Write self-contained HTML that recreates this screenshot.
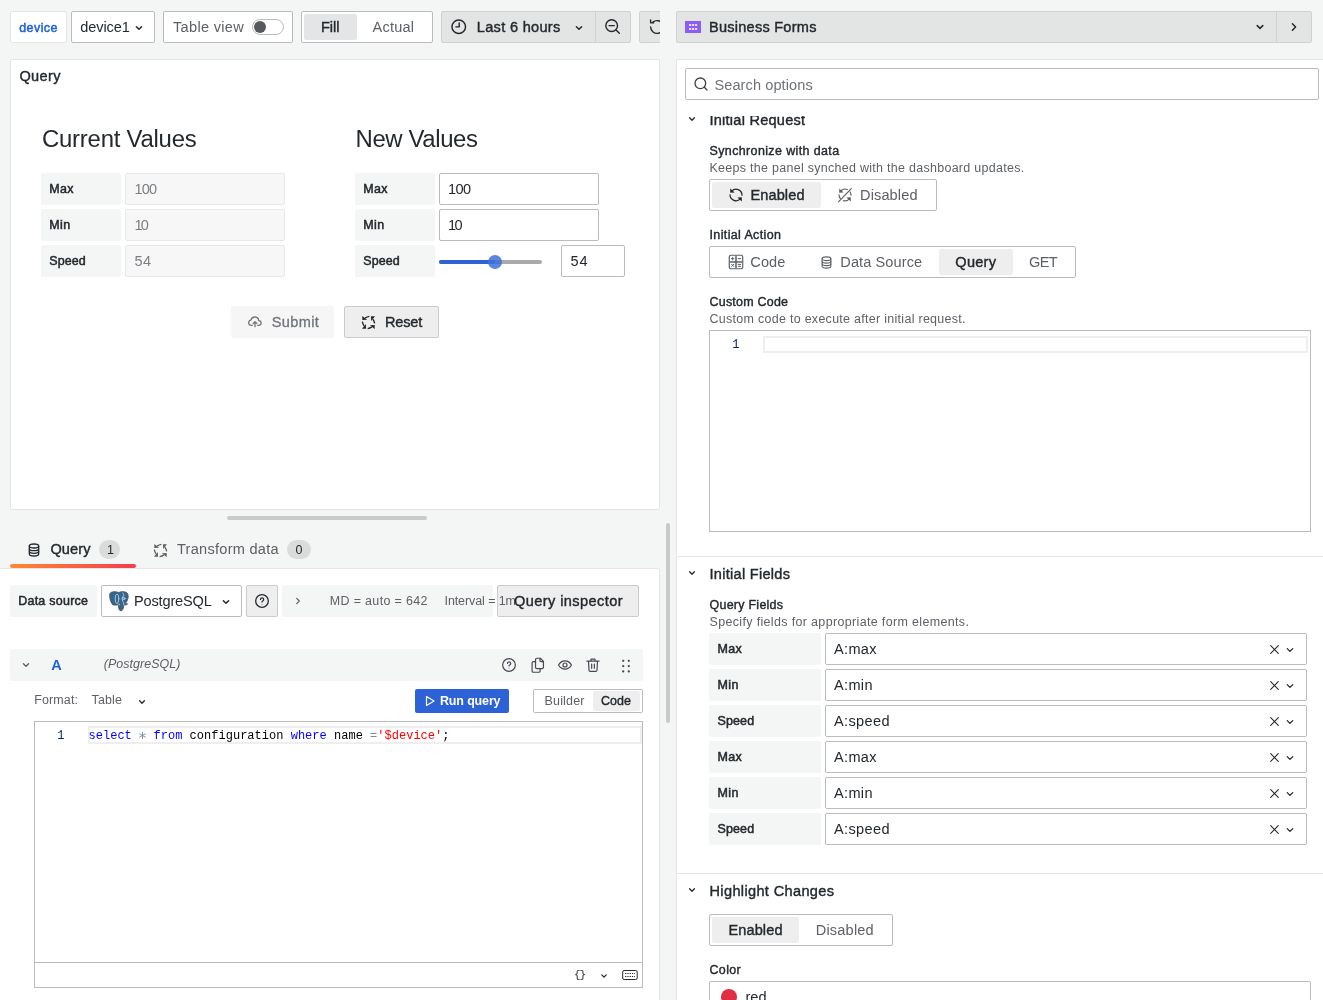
<!DOCTYPE html>
<html><head><meta charset="utf-8"><title>Edit panel</title>
<style>
html,body{margin:0;padding:0;}
body{width:1323px;height:1000px;overflow:hidden;background:#f4f5f5;position:relative;font-family:"Liberation Sans",sans-serif;color:#24292e;}
.b{position:absolute;box-sizing:border-box;}
.t{position:absolute;white-space:pre;}
svg{position:absolute;overflow:visible;}
.i{fill:none;stroke:#24292e;stroke-width:1.4;stroke-linecap:round;stroke-linejoin:round;}
</style></head><body>
<div class="b" style="left:10px;top:11px;width:57px;height:32px;background:#fff;border:1px solid #e5e5e6;border-radius:2px;"></div>
<div class="b" style="left:71px;top:11px;width:84px;height:32px;background:#fff;border:1px solid #b9bbbd;border-radius:2px;"></div>
<svg style="left:133px;top:21.5px" width="12" height="12" viewBox="-6 -6 12 12"><path d="M-2.6 -1.3 L0 1.3 L2.6 -1.3" fill="none" stroke="#24292e" stroke-width="1.5" stroke-linecap="round" stroke-linejoin="round"/></svg>
<div class="b" style="left:163px;top:11px;width:130px;height:32px;background:#fff;border:1px solid #b9bbbd;border-radius:2px;"></div>
<div class="b" style="left:252px;top:19px;width:32px;height:16px;background:#fff;border:1px solid #b9bbbd;border-radius:8px;"></div>
<div class="b" style="left:254px;top:21px;width:12px;height:12px;border-radius:6px;background:#56595e"></div>
<div class="b" style="left:301px;top:11px;width:132px;height:32px;background:#fff;border:1px solid #b9bbbd;border-radius:2px;"></div>
<div class="b" style="left:304px;top:14px;width:53px;height:26px;background:#e4e5e6;border-radius:2px;"></div>
<div class="b" style="left:441px;top:11px;width:190px;height:32px;background:#e3e4e4;border:1px solid #cfd1d2;border-radius:2px;"></div>
<div class="b" style="left:595px;top:12px;width:1px;height:30px;background:#cfd1d2"></div>
<svg style="left:450.25px;top:18.15px" width="17.5" height="17.5" viewBox="0 0 24 24" fill="none" stroke="#24292e" stroke-width="1.9885714285714284" stroke-linecap="round" stroke-linejoin="round"><circle cx="12" cy="12" r="9.300"/><path d="M12.600 6.800v5.400H8.200"/></svg>
<svg style="left:572.8px;top:21.5px" width="12" height="12" viewBox="-6 -6 12 12"><path d="M-2.6 -1.3 L0 1.3 L2.6 -1.3" fill="none" stroke="#24292e" stroke-width="1.5" stroke-linecap="round" stroke-linejoin="round"/></svg>
<svg style="left:603.95px;top:18.05px" width="17.5" height="17.5" viewBox="0 0 24 24" fill="none" stroke="#24292e" stroke-width="1.9199999999999997" stroke-linecap="round" stroke-linejoin="round"><circle cx="10.500" cy="10.500" r="8"/><path d="M7 10.500h7M16.500 16.500l4.500 4.500"/></svg>
<div class="b" style="left:639px;top:11px;width:21px;height:32px;overflow:hidden"><div class="b" style="left:0;top:0;width:60px;height:32px;background:#e3e4e4;border:1px solid #cfd1d2;border-radius:2px"></div><svg style="left:8.500px;top:7px" width="18" height="18" viewBox="0 0 24 24" fill="none" stroke="#24292e" stroke-width="1.900" stroke-linecap="round" stroke-linejoin="round"><path d="M3.5 12a8.5 8.5 0 1 0 3-6.5M3.5 2.5v4h4"/></svg></div>
<div class="b" style="left:10px;top:59px;width:650px;height:451px;background:#fff;border:1px solid #e5e5e6;border-radius:2px;"></div>
<div class="b" style="left:41px;top:173px;width:80px;height:32px;background:#f4f5f5;border-radius:2px;"></div>
<div class="b" style="left:355px;top:173px;width:80px;height:32px;background:#f4f5f5;border-radius:2px;"></div>
<div class="b" style="left:125px;top:173px;width:160px;height:32px;background:#f7f7f7;border:1px solid #e7e8e9;border-radius:2px;"></div>
<div class="b" style="left:41px;top:209px;width:80px;height:32px;background:#f4f5f5;border-radius:2px;"></div>
<div class="b" style="left:355px;top:209px;width:80px;height:32px;background:#f4f5f5;border-radius:2px;"></div>
<div class="b" style="left:125px;top:209px;width:160px;height:32px;background:#f7f7f7;border:1px solid #e7e8e9;border-radius:2px;"></div>
<div class="b" style="left:41px;top:245px;width:80px;height:32px;background:#f4f5f5;border-radius:2px;"></div>
<div class="b" style="left:355px;top:245px;width:80px;height:32px;background:#f4f5f5;border-radius:2px;"></div>
<div class="b" style="left:125px;top:245px;width:160px;height:32px;background:#f7f7f7;border:1px solid #e7e8e9;border-radius:2px;"></div>
<div class="b" style="left:439px;top:173px;width:160px;height:32px;background:#fff;border:1px solid #b9bbbd;border-radius:2px;"></div>
<div class="b" style="left:439px;top:209px;width:160px;height:32px;background:#fff;border:1px solid #b9bbbd;border-radius:2px;"></div>
<div class="b" style="left:439px;top:260px;width:103px;height:4px;border-radius:2px;background:#a8aaac"></div>
<div class="b" style="left:439px;top:260px;width:56px;height:4px;border-radius:2px;background:#2c62d6"></div>
<div class="b" style="left:488px;top:255px;width:14px;height:14px;border-radius:7px;background:rgba(61,113,217,0.850)"></div>
<div class="b" style="left:561px;top:245px;width:64px;height:32px;background:#fff;border:1px solid #b9bbbd;border-radius:2px;"></div>
<div class="b" style="left:231px;top:306px;width:103px;height:32px;background:#f6f6f7;border-radius:2px;"></div>
<svg style="left:246.8px;top:314.0px" width="16" height="16" viewBox="0 0 24 24" fill="none" stroke="#74787d" stroke-width="1.9500000000000002" stroke-linecap="round" stroke-linejoin="round"><path d="M8 17H6.5a4 4 0 0 1-.6-7.95A6 6 0 0 1 17.7 10a3.5 3.5 0 0 1-.2 7H16"/><path d="M12 19v-7M9.3 14.2L12 11.5l2.7 2.7"/></svg>
<div class="b" style="left:344px;top:306px;width:95px;height:32px;background:#eeeeef;border:1px solid #c9cbcd;border-radius:2px;"></div>
<svg style="left:359.5px;top:313.5px" width="17" height="17" viewBox="0 0 24 24"><g transform="rotate(0 12 12)"><path d="M3.300 2.800L3.300 8.600L10 8.200Z" fill="#24292e" stroke="none"/><path d="M7.200 5.800Q10 3.800 13.200 3.300" stroke="#24292e" stroke-width="1.900" fill="none" stroke-linecap="butt"/></g><g transform="rotate(90 12 12)"><path d="M3.300 2.800L3.300 8.600L10 8.200Z" fill="#24292e" stroke="none"/><path d="M7.200 5.800Q10 3.800 13.200 3.300" stroke="#24292e" stroke-width="1.900" fill="none" stroke-linecap="butt"/></g><g transform="rotate(180 12 12)"><path d="M3.300 2.800L3.300 8.600L10 8.200Z" fill="#24292e" stroke="none"/><path d="M7.200 5.800Q10 3.800 13.200 3.300" stroke="#24292e" stroke-width="1.900" fill="none" stroke-linecap="butt"/></g><g transform="rotate(270 12 12)"><path d="M3.300 2.800L3.300 8.600L10 8.200Z" fill="#24292e" stroke="none"/><path d="M7.200 5.800Q10 3.800 13.200 3.300" stroke="#24292e" stroke-width="1.900" fill="none" stroke-linecap="butt"/></g></svg>
<div class="b" style="left:227px;top:516px;width:200px;height:4px;border-radius:2px;background:#c9caca"></div>
<svg style="left:25.700000000000003px;top:542.0px" width="16" height="16" viewBox="0 0 24 24" fill="none" stroke="#24292e" stroke-width="1.9500000000000002" stroke-linecap="round" stroke-linejoin="round"><ellipse cx="12" cy="6" rx="7" ry="3"/><path d="M5 6v12c0 1.66 3.13 3 7 3s7-1.34 7-3V6"/><path d="M5 10c0 1.66 3.13 3 7 3s7-1.34 7-3M5 14c0 1.66 3.13 3 7 3s7-1.34 7-3"/></svg>
<div class="b" style="left:99px;top:540px;width:21px;height:19px;background:#dadbdb;border-radius:9.5px;"></div>
<svg style="left:151.5px;top:541.5px" width="17" height="17" viewBox="0 0 24 24"><g transform="rotate(0 12 12)"><path d="M3.300 2.800L3.300 8.600L10 8.200Z" fill="#5d6166" stroke="none"/><path d="M7.200 5.800Q10 3.800 13.200 3.300" stroke="#5d6166" stroke-width="1.900" fill="none" stroke-linecap="butt"/></g><g transform="rotate(90 12 12)"><path d="M3.300 2.800L3.300 8.600L10 8.200Z" fill="#5d6166" stroke="none"/><path d="M7.200 5.800Q10 3.800 13.200 3.300" stroke="#5d6166" stroke-width="1.900" fill="none" stroke-linecap="butt"/></g><g transform="rotate(180 12 12)"><path d="M3.300 2.800L3.300 8.600L10 8.200Z" fill="#5d6166" stroke="none"/><path d="M7.200 5.800Q10 3.800 13.200 3.300" stroke="#5d6166" stroke-width="1.900" fill="none" stroke-linecap="butt"/></g><g transform="rotate(270 12 12)"><path d="M3.300 2.800L3.300 8.600L10 8.200Z" fill="#5d6166" stroke="none"/><path d="M7.200 5.800Q10 3.800 13.200 3.300" stroke="#5d6166" stroke-width="1.900" fill="none" stroke-linecap="butt"/></g></svg>
<div class="b" style="left:287px;top:540px;width:24px;height:19px;background:#dadbdb;border-radius:9.5px;"></div>
<div class="b" style="left:-2px;top:568px;width:662px;height:440px;background:#fff;border:1px solid #e5e5e6;border-radius:0 2px 0 0"></div>
<div class="b" style="left:10px;top:564px;width:126px;height:4px;border-radius:2px;background:linear-gradient(90deg,#ff8833,#f53e4c)"></div>
<div class="b" style="left:666px;top:523px;width:4px;height:200px;border-radius:2px;background:#c8c9ca"></div>
<div class="b" style="left:10px;top:585px;width:87px;height:32px;background:#f4f5f5;border-radius:2px;"></div>
<div class="b" style="left:101px;top:585px;width:141px;height:32px;background:#fff;border:1px solid #b9bbbd;border-radius:2px;"></div>
<svg style="left:109px;top:590.500px" width="20" height="20.500" viewBox="0 0 20 20.500"><path d="M3 1.200C6 0.200 8 0.900 9.500 1.500C12 0.300 16 0.300 18 2C20.500 5 18.500 10 16.200 12.500C17 12.800 18 12.600 18.600 12.900C17.500 14.100 15.500 14 14.800 13.800C14.600 16 14.300 18.500 12.800 19.600C10.500 20.300 9.600 18 9.600 16L9.500 13.500C8 14.300 5 14.300 3.500 13.500C1 10 0.200 5 1 2.500C1.500 1.500 2.200 1.300 3 1.200Z" fill="#336791" stroke="#4b4f55" stroke-width="0.900" stroke-linejoin="round"/><g fill="none" stroke="#dfe9f3" stroke-width="0.700" stroke-linecap="round"><ellipse cx="8" cy="7.800" rx="1.800" ry="4.800"/><path d="M13.500 1.800C15 3 15.500 4.800 13.400 6.200M13.400 6.200C12.500 8 13.500 10 14.500 11.500C15 12.500 14.800 13.300 14.800 13.800M9.600 12.800C10.500 12.500 10.800 13.200 10.300 14"/><circle cx="14.900" cy="7.600" r="1.100"/></g></svg>
<svg style="left:220px;top:595.5px" width="12" height="12" viewBox="-6 -6 12 12"><path d="M-2.6 -1.3 L0 1.3 L2.6 -1.3" fill="none" stroke="#24292e" stroke-width="1.5" stroke-linecap="round" stroke-linejoin="round"/></svg>
<div class="b" style="left:246px;top:585px;width:32px;height:32px;background:#eeeeef;border:1px solid #c9cbcd;border-radius:2px;"></div>
<svg style="left:254.0px;top:593.0px" width="16" height="16" viewBox="0 0 24 24" fill="none" stroke="#24292e" stroke-width="1.9500000000000002" stroke-linecap="round" stroke-linejoin="round"><circle cx="12" cy="12" r="9.500"/><path d="M9.700 9.700a2.400 2.400 0 1 1 3.300 2.300c-.7.300-1 .8-1 1.500"/><circle cx="12" cy="16.800" r="0.700" fill="#24292e" stroke="none"/></svg>
<div class="b" style="left:282px;top:585px;width:211px;height:32px;background:#f4f5f5;border-radius:2px;"></div>
<svg style="left:291.9px;top:595px" width="12" height="12" viewBox="-6 -6 12 12"><path d="M-1.3 -2.6 L1.3 0 L-1.3 2.6" fill="none" stroke="#5d6166" stroke-width="1.2" stroke-linecap="round" stroke-linejoin="round"/></svg>
<div class="b" style="left:497px;top:585px;width:142px;height:32px;background:#eeeeef;border:1px solid #c9cbcd;border-radius:2px;"></div>
<div class="b" style="left:10px;top:649px;width:633px;height:32px;background:#f4f5f5;border-radius:2px;"></div>
<svg style="left:20px;top:659px" width="12" height="12" viewBox="-6 -6 12 12"><path d="M-2.6 -1.3 L0 1.3 L2.6 -1.3" fill="none" stroke="#5d6166" stroke-width="1.3" stroke-linecap="round" stroke-linejoin="round"/></svg>
<svg style="left:500.6px;top:657.0px" width="16" height="16" viewBox="0 0 24 24" fill="none" stroke="#464a50" stroke-width="1.7999999999999998" stroke-linecap="round" stroke-linejoin="round"><circle cx="12" cy="12" r="9.500"/><path d="M9.700 9.700a2.400 2.400 0 1 1 3.300 2.300c-.7.300-1 .8-1 1.500"/><circle cx="12" cy="16.800" r="0.700" fill="#464a50" stroke="none"/></svg>
<svg style="left:528.75px;top:656.75px" width="16.5" height="16.5" viewBox="0 0 24 24" fill="none" stroke="#464a50" stroke-width="1.7454545454545454" stroke-linecap="round" stroke-linejoin="round"><path d="M11.500 1.800h5l4.500 4.500v8.700a2 2 0 0 1-2 2h-7.500a2 2 0 0 1-2-2V3.800a2 2 0 0 1 2-2z"/><path d="M16 2v3.300a1.500 1.500 0 0 0 1.500 1.500h3.300"/><path d="M9.300 6.800H6.500a2 2 0 0 0-2 2v11.400a2 2 0 0 0 2 2h7.700a2 2 0 0 0 2-2v-3"/></svg>
<svg style="left:557.0px;top:657.2px" width="16" height="16" viewBox="0 0 24 24" fill="none" stroke="#464a50" stroke-width="1.7999999999999998" stroke-linecap="round" stroke-linejoin="round"><path d="M2.300 12S5.800 5.800 12 5.800s9.700 6.200 9.700 6.200-3.500 6.200-9.700 6.200S2.300 12 2.300 12z"/><circle cx="12" cy="12" r="3"/></svg>
<svg style="left:584.9px;top:657.0px" width="16" height="16" viewBox="0 0 24 24" fill="none" stroke="#464a50" stroke-width="1.7999999999999998" stroke-linecap="round" stroke-linejoin="round"><path d="M3 6.300h18M9 6.300V3.300h6v3M5.300 6.300l.7 13.700a1.800 1.800 0 0 0 1.800 1.700h8.400a1.800 1.800 0 0 0 1.800-1.700l.7-13.700M10 10.500v6.500M14 10.500v6.500"/></svg>
<svg style="left:620px;top:658px" width="12" height="16" viewBox="0 0 12 16" fill="#464a50"><circle cx="3.200" cy="2.800" r="1.150"/><circle cx="8.800" cy="2.800" r="1.150"/><circle cx="3.200" cy="8.100" r="1.150"/><circle cx="8.800" cy="8.100" r="1.150"/><circle cx="3.200" cy="13.400" r="1.150"/><circle cx="8.800" cy="13.400" r="1.150"/></svg>
<svg style="left:136px;top:696px" width="12" height="12" viewBox="-6 -6 12 12"><path d="M-2.4 -1.2 L0 1.2 L2.4 -1.2" fill="none" stroke="#24292e" stroke-width="1.3" stroke-linecap="round" stroke-linejoin="round"/></svg>
<div class="b" style="left:415px;top:689px;width:94px;height:24px;background:#2c62d6;border-radius:2px;"></div>
<svg style="left:424px;top:694.500px" width="12" height="12" viewBox="0 0 12 12" fill="none" stroke="#fff" stroke-width="1.2" stroke-linejoin="round"><path d="M2.500 1.500v9l7.500-4.500z"/></svg>
<div class="b" style="left:533px;top:689px;width:110px;height:24px;background:#fff;border:1px solid #b9bbbd;border-radius:2px;"></div>
<div class="b" style="left:593px;top:691px;width:47px;height:20px;background:#eeeeef;border-radius:2px;"></div>
<div class="b" style="left:34px;top:721px;width:609px;height:242px;background:#fff;border:1px solid #b9bbbd;"></div>
<div class="b" style="left:34px;top:962px;width:609px;height:26px;background:#fff;border:1px solid #b9bbbd;"></div>
<div class="b" style="left:88px;top:726px;width:554px;height:18px;border:2px solid #eeeeee"></div>
<svg style="left:138.500px;top:732.300px" width="7" height="7" viewBox="-3.500 -3.500 7 7" stroke="#778899" stroke-width="0.900" stroke-linecap="round"><path d="M0 -3.200V3.200M-2.900 -1.600L2.900 1.600M-2.900 1.600L2.900 -1.600"/></svg>
<svg style="left:597.8px;top:969.5px" width="12" height="12" viewBox="-6 -6 12 12"><path d="M-2.2 -1.1 L0 1.1 L2.2 -1.1" fill="none" stroke="#24292e" stroke-width="1.3" stroke-linecap="round" stroke-linejoin="round"/></svg>
<svg style="left:622px;top:970px" width="16" height="10" viewBox="0 0 16 10" fill="none" stroke="#24292e" stroke-width="1"><rect x="0.7" y="0.5" width="14.500" height="9" rx="1.5"/><path d="M3 3.500h10M3 6.500h10" stroke-dasharray="1.3 1"/></svg>
<div class="b" style="left:676px;top:11px;width:636px;height:32px;background:#e3e4e4;border:1px solid #cfd1d2;border-radius:2px;"></div>
<div class="b" style="left:1276px;top:12px;width:1px;height:30px;background:#cfd1d2"></div>
<svg style="left:685px;top:21px" width="16" height="12" viewBox="0 0 16 12"><rect width="16" height="12" fill="#8b5cf6"/><g fill="#e9ddff"><rect x="4" y="3" width="2.2" height="2"/><rect x="7" y="3" width="2.2" height="2"/><rect x="10" y="3" width="2.2" height="2"/><rect x="4" y="7" width="2.2" height="2"/><rect x="7" y="7" width="2.2" height="2"/><rect x="10" y="7" width="2.2" height="2"/></g></svg>
<svg style="left:1254px;top:21px" width="12" height="12" viewBox="-6 -6 12 12"><path d="M-2.8 -1.4 L0 1.4 L2.8 -1.4" fill="none" stroke="#24292e" stroke-width="1.5" stroke-linecap="round" stroke-linejoin="round"/></svg>
<svg style="left:1287.7px;top:21px" width="12" height="12" viewBox="-6 -6 12 12"><path d="M-1.6 -3.2 L1.6 0 L-1.6 3.2" fill="none" stroke="#24292e" stroke-width="1.5" stroke-linecap="round" stroke-linejoin="round"/></svg>
<div class="b" style="left:676px;top:59px;width:660px;height:960px;background:#fff;border:1px solid #e5e5e6;border-radius:2px 0 0 0"></div>
<div class="b" style="left:685px;top:68px;width:634px;height:32px;background:#fff;border:1px solid #b9bbbd;border-radius:2px;"></div>
<svg style="left:693.0px;top:76.0px" width="16" height="16" viewBox="0 0 24 24" fill="none" stroke="#3d4247" stroke-width="1.9500000000000002" stroke-linecap="round" stroke-linejoin="round"><circle cx="11" cy="11" r="8"/><path d="M17 17l4 4"/></svg>
<svg style="left:686.3px;top:113px" width="12" height="12" viewBox="-6 -6 12 12"><path d="M-2.4 -1.2 L0 1.2 L2.4 -1.2" fill="none" stroke="#24292e" stroke-width="1.3" stroke-linecap="round" stroke-linejoin="round"/></svg>
<div class="b" style="left:709px;top:179px;width:228px;height:32px;background:#fff;border:1px solid #b9bbbd;border-radius:2px;"></div>
<div class="b" style="left:712px;top:182px;width:109px;height:26px;background:#eeeeef;border-radius:2px;"></div>
<svg style="left:728.0px;top:186.8px" width="16" height="16" viewBox="0 0 24 24"><path d="M5.500 6.200A9 9 0 0 1 21 12.300M3 11.700A9 9 0 0 0 18.500 17.800" fill="none" stroke="#24292e" stroke-width="1.900" stroke-linecap="round"/><path d="M3.300 2.200L3.300 8.800L10 8.200Z M20.700 21.800L20.700 15.200L14 15.800Z" fill="#24292e"/></svg>
<svg style="left:837.0px;top:186.8px" width="16" height="16" viewBox="0 0 24 24"><path d="M5.500 6.200A9 9 0 0 1 15.500 3.700M19.800 7.600A9 9 0 0 1 21 12.300M3 11.700A9 9 0 0 0 4.800 17M9.500 20.600A9 9 0 0 0 18.500 17.800M2.500 22L21.500 2.500" fill="none" stroke="#5d6166" stroke-width="1.800" stroke-linecap="round"/><path d="M3.300 2.200L3.300 8.800L10 8.200Z M20.700 21.800L20.700 15.200L14 15.800Z" fill="#5d6166"/></svg>
<div class="b" style="left:709px;top:246px;width:367px;height:32px;background:#fff;border:1px solid #b9bbbd;border-radius:2px;"></div>
<svg style="left:728.0px;top:254.0px" width="16" height="16" viewBox="0 0 24 24" fill="none" stroke="#5d6166" stroke-width="1.7999999999999998" stroke-linecap="round" stroke-linejoin="round"><rect x="1.900" y="1.900" width="20.200" height="20.200" rx="2.500"/><path d="M12 2.800v18.400M2.800 12h18.400" stroke-width="2.300" stroke-linecap="butt"/><path d="M5.200 7h3.600M7 5.200v3.600M15.200 7h3.800M5.400 15.400l3.200 3.200M8.600 15.400l-3.200 3.200M15.200 15.600h3.800M15.200 18.400h3.800" stroke-width="1.500"/></svg>
<svg style="left:819.1px;top:254.5px" width="15" height="15" viewBox="0 0 24 24" fill="none" stroke="#5d6166" stroke-width="1.7600000000000002" stroke-linecap="round" stroke-linejoin="round"><ellipse cx="12" cy="6" rx="7" ry="3"/><path d="M5 6v12c0 1.66 3.13 3 7 3s7-1.34 7-3V6"/><path d="M5 10c0 1.66 3.13 3 7 3s7-1.34 7-3M5 14c0 1.66 3.13 3 7 3s7-1.34 7-3"/></svg>
<div class="b" style="left:939px;top:249px;width:74px;height:26px;background:#eeeeef;border-radius:2px;"></div>
<div class="b" style="left:709px;top:330px;width:602px;height:202px;background:#fff;border:1px solid #b9bbbd;"></div>
<div class="b" style="left:763px;top:336px;width:545px;height:17px;border:2px solid #eeeeee"></div>
<div class="b" style="left:677px;top:556px;width:650px;height:1px;background:#e5e5e6"></div>
<svg style="left:686.3px;top:567px" width="12" height="12" viewBox="-6 -6 12 12"><path d="M-2.4 -1.2 L0 1.2 L2.4 -1.2" fill="none" stroke="#24292e" stroke-width="1.3" stroke-linecap="round" stroke-linejoin="round"/></svg>
<div class="b" style="left:709px;top:633px;width:112px;height:32px;background:#f4f5f5;border-radius:2px;"></div>
<div class="b" style="left:825px;top:633px;width:482px;height:32px;background:#fff;border:1px solid #b9bbbd;border-radius:2px;"></div>
<svg style="left:1269.5px;top:645px" width="9" height="9" viewBox="0 0 9 9"><path d="M0.700 0.700L8.300 8.300M8.300 0.700L0.700 8.300" stroke="#24292e" stroke-width="1.1" stroke-linecap="round"/></svg>
<svg style="left:1284px;top:643.5px" width="12" height="12" viewBox="-6 -6 12 12"><path d="M-2.8 -1.4 L0 1.4 L2.8 -1.4" fill="none" stroke="#24292e" stroke-width="1.3" stroke-linecap="round" stroke-linejoin="round"/></svg>
<div class="b" style="left:709px;top:669px;width:112px;height:32px;background:#f4f5f5;border-radius:2px;"></div>
<div class="b" style="left:825px;top:669px;width:482px;height:32px;background:#fff;border:1px solid #b9bbbd;border-radius:2px;"></div>
<svg style="left:1269.5px;top:681px" width="9" height="9" viewBox="0 0 9 9"><path d="M0.700 0.700L8.300 8.300M8.300 0.700L0.700 8.300" stroke="#24292e" stroke-width="1.1" stroke-linecap="round"/></svg>
<svg style="left:1284px;top:679.5px" width="12" height="12" viewBox="-6 -6 12 12"><path d="M-2.8 -1.4 L0 1.4 L2.8 -1.4" fill="none" stroke="#24292e" stroke-width="1.3" stroke-linecap="round" stroke-linejoin="round"/></svg>
<div class="b" style="left:709px;top:705px;width:112px;height:32px;background:#f4f5f5;border-radius:2px;"></div>
<div class="b" style="left:825px;top:705px;width:482px;height:32px;background:#fff;border:1px solid #b9bbbd;border-radius:2px;"></div>
<svg style="left:1269.5px;top:717px" width="9" height="9" viewBox="0 0 9 9"><path d="M0.700 0.700L8.300 8.300M8.300 0.700L0.700 8.300" stroke="#24292e" stroke-width="1.1" stroke-linecap="round"/></svg>
<svg style="left:1284px;top:715.5px" width="12" height="12" viewBox="-6 -6 12 12"><path d="M-2.8 -1.4 L0 1.4 L2.8 -1.4" fill="none" stroke="#24292e" stroke-width="1.3" stroke-linecap="round" stroke-linejoin="round"/></svg>
<div class="b" style="left:709px;top:741px;width:112px;height:32px;background:#f4f5f5;border-radius:2px;"></div>
<div class="b" style="left:825px;top:741px;width:482px;height:32px;background:#fff;border:1px solid #b9bbbd;border-radius:2px;"></div>
<svg style="left:1269.5px;top:753px" width="9" height="9" viewBox="0 0 9 9"><path d="M0.700 0.700L8.300 8.300M8.300 0.700L0.700 8.300" stroke="#24292e" stroke-width="1.1" stroke-linecap="round"/></svg>
<svg style="left:1284px;top:751.5px" width="12" height="12" viewBox="-6 -6 12 12"><path d="M-2.8 -1.4 L0 1.4 L2.8 -1.4" fill="none" stroke="#24292e" stroke-width="1.3" stroke-linecap="round" stroke-linejoin="round"/></svg>
<div class="b" style="left:709px;top:777px;width:112px;height:32px;background:#f4f5f5;border-radius:2px;"></div>
<div class="b" style="left:825px;top:777px;width:482px;height:32px;background:#fff;border:1px solid #b9bbbd;border-radius:2px;"></div>
<svg style="left:1269.5px;top:789px" width="9" height="9" viewBox="0 0 9 9"><path d="M0.700 0.700L8.300 8.300M8.300 0.700L0.700 8.300" stroke="#24292e" stroke-width="1.1" stroke-linecap="round"/></svg>
<svg style="left:1284px;top:787.5px" width="12" height="12" viewBox="-6 -6 12 12"><path d="M-2.8 -1.4 L0 1.4 L2.8 -1.4" fill="none" stroke="#24292e" stroke-width="1.3" stroke-linecap="round" stroke-linejoin="round"/></svg>
<div class="b" style="left:709px;top:813px;width:112px;height:32px;background:#f4f5f5;border-radius:2px;"></div>
<div class="b" style="left:825px;top:813px;width:482px;height:32px;background:#fff;border:1px solid #b9bbbd;border-radius:2px;"></div>
<svg style="left:1269.5px;top:825px" width="9" height="9" viewBox="0 0 9 9"><path d="M0.700 0.700L8.300 8.300M8.300 0.700L0.700 8.300" stroke="#24292e" stroke-width="1.1" stroke-linecap="round"/></svg>
<svg style="left:1284px;top:823.5px" width="12" height="12" viewBox="-6 -6 12 12"><path d="M-2.8 -1.4 L0 1.4 L2.8 -1.4" fill="none" stroke="#24292e" stroke-width="1.3" stroke-linecap="round" stroke-linejoin="round"/></svg>
<div class="b" style="left:677px;top:873px;width:650px;height:1px;background:#e5e5e6"></div>
<svg style="left:686.3px;top:884px" width="12" height="12" viewBox="-6 -6 12 12"><path d="M-2.4 -1.2 L0 1.2 L2.4 -1.2" fill="none" stroke="#24292e" stroke-width="1.3" stroke-linecap="round" stroke-linejoin="round"/></svg>
<div class="b" style="left:709px;top:914px;width:184px;height:32px;background:#fff;border:1px solid #b9bbbd;border-radius:2px;"></div>
<div class="b" style="left:712px;top:917px;width:87px;height:26px;background:#eeeeef;border-radius:2px;"></div>
<div class="b" style="left:709px;top:981px;width:602px;height:32px;background:#fff;border:1px solid #b9bbbd;border-radius:2px;"></div>
<div class="b" style="left:721px;top:989px;width:16px;height:16px;border-radius:8px;background:#e02f44"></div>
<div id="tx" style="position:absolute;left:0;top:0;width:1323px;height:1000px;will-change:transform">
<span class="t" style="left:19.2px;top:18.5px;line-height:18px;font-family:'Liberation Sans', sans-serif;font-size:12.48px;font-weight:400;color:#1f62e0;letter-spacing:0.45px;-webkit-text-stroke:0.5px #1f62e0;">device</span>
<span class="t" style="left:80.3px;top:17.0px;line-height:21px;font-family:'Liberation Sans', sans-serif;font-size:14.56px;font-weight:400;color:#24292e;letter-spacing:-0.09px;">device1</span>
<span class="t" style="left:173px;top:17.0px;line-height:21px;font-family:'Liberation Sans', sans-serif;font-size:14.56px;font-weight:400;color:#5d6166;letter-spacing:0.31px;">Table view</span>
<span class="t" style="left:321px;top:17.0px;line-height:21px;font-family:'Liberation Sans', sans-serif;font-size:14.56px;font-weight:400;color:#24292e;letter-spacing:-0.03px;-webkit-text-stroke:0.4px #24292e;">Fill</span>
<span class="t" style="left:372.5px;top:17.0px;line-height:21px;font-family:'Liberation Sans', sans-serif;font-size:14.56px;font-weight:400;color:#5d6166;letter-spacing:0.21px;">Actual</span>
<span class="t" style="left:476.8px;top:17.0px;line-height:21px;font-family:'Liberation Sans', sans-serif;font-size:14.56px;font-weight:400;color:#24292e;letter-spacing:0.31px;-webkit-text-stroke:0.4px #24292e;">Last 6 hours</span>
<span class="t" style="left:19.4px;top:65.5px;line-height:21px;font-family:'Liberation Sans', sans-serif;font-size:14.56px;font-weight:400;color:#24292e;letter-spacing:0.37px;-webkit-text-stroke:0.4px #24292e;">Query</span>
<span class="t" style="left:42px;top:122.0px;line-height:34px;font-family:'Liberation Sans', sans-serif;font-size:23.92px;font-weight:400;color:#24292e;letter-spacing:-0.23px;">Current Values</span>
<span class="t" style="left:355.5px;top:122.0px;line-height:34px;font-family:'Liberation Sans', sans-serif;font-size:23.92px;font-weight:400;color:#24292e;letter-spacing:-0.37px;">New Values</span>
<span class="t" style="left:49.2px;top:179.5px;line-height:18px;font-family:'Liberation Sans', sans-serif;font-size:12.48px;font-weight:400;color:#24292e;letter-spacing:0.37px;-webkit-text-stroke:0.5px #24292e;">Max</span>
<span class="t" style="left:49.2px;top:215.5px;line-height:18px;font-family:'Liberation Sans', sans-serif;font-size:12.48px;font-weight:400;color:#24292e;letter-spacing:0.45px;-webkit-text-stroke:0.5px #24292e;">Min</span>
<span class="t" style="left:49.2px;top:251.5px;line-height:18px;font-family:'Liberation Sans', sans-serif;font-size:12.48px;font-weight:400;color:#24292e;letter-spacing:0.13px;-webkit-text-stroke:0.5px #24292e;">Speed</span>
<span class="t" style="left:363.2px;top:179.5px;line-height:18px;font-family:'Liberation Sans', sans-serif;font-size:12.48px;font-weight:400;color:#24292e;letter-spacing:0.37px;-webkit-text-stroke:0.5px #24292e;">Max</span>
<span class="t" style="left:363.2px;top:215.5px;line-height:18px;font-family:'Liberation Sans', sans-serif;font-size:12.48px;font-weight:400;color:#24292e;letter-spacing:0.45px;-webkit-text-stroke:0.5px #24292e;">Min</span>
<span class="t" style="left:363.2px;top:251.5px;line-height:18px;font-family:'Liberation Sans', sans-serif;font-size:12.48px;font-weight:400;color:#24292e;letter-spacing:0.13px;-webkit-text-stroke:0.5px #24292e;">Speed</span>
<span class="t" style="left:134.5px;top:179.0px;line-height:21px;font-family:'Liberation Sans', sans-serif;font-size:14.56px;font-weight:400;color:#7b8086;letter-spacing:-0.89px;">100</span>
<span class="t" style="left:134.5px;top:215.0px;line-height:21px;font-family:'Liberation Sans', sans-serif;font-size:14.56px;font-weight:400;color:#7b8086;letter-spacing:-1.89px;">10</span>
<span class="t" style="left:134.5px;top:251.0px;line-height:21px;font-family:'Liberation Sans', sans-serif;font-size:14.56px;font-weight:400;color:#7b8086;letter-spacing:0.31px;">54</span>
<span class="t" style="left:448px;top:179.0px;line-height:21px;font-family:'Liberation Sans', sans-serif;font-size:14.56px;font-weight:400;color:#24292e;letter-spacing:-0.64px;">100</span>
<span class="t" style="left:448px;top:215.0px;line-height:21px;font-family:'Liberation Sans', sans-serif;font-size:14.56px;font-weight:400;color:#24292e;letter-spacing:-1.59px;">10</span>
<span class="t" style="left:570.5px;top:251.0px;line-height:21px;font-family:'Liberation Sans', sans-serif;font-size:14.56px;font-weight:400;color:#24292e;letter-spacing:0.81px;">54</span>
<span class="t" style="left:271.8px;top:312.0px;line-height:21px;font-family:'Liberation Sans', sans-serif;font-size:14.56px;font-weight:400;color:#70747a;letter-spacing:0.34px;-webkit-text-stroke:0.3px #70747a;">Submit</span>
<span class="t" style="left:384.9px;top:312.0px;line-height:21px;font-family:'Liberation Sans', sans-serif;font-size:14.56px;font-weight:400;color:#24292e;letter-spacing:-0.18px;-webkit-text-stroke:0.4px #24292e;">Reset</span>
<span class="t" style="left:50.4px;top:539.0px;line-height:21px;font-family:'Liberation Sans', sans-serif;font-size:14.56px;font-weight:400;color:#24292e;letter-spacing:0.12px;-webkit-text-stroke:0.4px #24292e;">Query</span>
<span class="t" style="left:107px;top:541.0px;line-height:18px;font-family:'Liberation Sans', sans-serif;font-size:12.48px;font-weight:400;color:#24292e;">1</span>
<span class="t" style="left:177px;top:539.0px;line-height:21px;font-family:'Liberation Sans', sans-serif;font-size:14.56px;font-weight:400;color:#5d6166;letter-spacing:0.27px;">Transform data</span>
<span class="t" style="left:295.5px;top:541.0px;line-height:18px;font-family:'Liberation Sans', sans-serif;font-size:12.48px;font-weight:400;color:#24292e;">0</span>
<span class="t" style="left:18.2px;top:591.9px;line-height:18px;font-family:'Liberation Sans', sans-serif;font-size:12.48px;font-weight:400;color:#24292e;letter-spacing:0.26px;-webkit-text-stroke:0.5px #24292e;">Data source</span>
<span class="t" style="left:134px;top:591.0px;line-height:21px;font-family:'Liberation Sans', sans-serif;font-size:14.56px;font-weight:400;color:#24292e;letter-spacing:-0.16px;">PostgreSQL</span>
<span class="t" style="left:329.8px;top:591.5px;line-height:18px;font-family:'Liberation Sans', sans-serif;font-size:12.48px;font-weight:400;color:#5d6166;letter-spacing:0.34px;">MD = auto = 642</span>
<span class="t" style="left:444.5px;top:591.5px;line-height:18px;font-family:'Liberation Sans', sans-serif;font-size:12.48px;font-weight:400;color:#5d6166;letter-spacing:-0.08px;">Interval = 1m</span>
<span class="t" style="left:513.9px;top:591.0px;line-height:21px;font-family:'Liberation Sans', sans-serif;font-size:14.56px;font-weight:400;color:#24292e;letter-spacing:0.43px;-webkit-text-stroke:0.4px #24292e;">Query inspector</span>
<span class="t" style="left:51.2px;top:655.0px;line-height:21px;font-family:'Liberation Sans', sans-serif;font-size:14.56px;font-weight:700;color:#1f62e0;">A</span>
<span class="t" style="left:103.7px;top:654.5px;line-height:18px;font-family:'Liberation Sans', sans-serif;font-size:12.48px;font-weight:400;font-style:italic;color:#5d6166;letter-spacing:0.05px;">(PostgreSQL)</span>
<span class="t" style="left:34.2px;top:691.0px;line-height:18px;font-family:'Liberation Sans', sans-serif;font-size:12.48px;font-weight:400;color:#5d6166;letter-spacing:0.14px;">Format:</span>
<span class="t" style="left:91.5px;top:691.0px;line-height:18px;font-family:'Liberation Sans', sans-serif;font-size:12.48px;font-weight:400;color:#5d6166;letter-spacing:0.17px;">Table</span>
<span class="t" style="left:440px;top:691.5px;line-height:18px;font-family:'Liberation Sans', sans-serif;font-size:12.48px;font-weight:700;color:#fff;letter-spacing:-0.14px;">Run query</span>
<span class="t" style="left:544.5px;top:691.5px;line-height:18px;font-family:'Liberation Sans', sans-serif;font-size:12.48px;font-weight:400;color:#5d6166;letter-spacing:0.2px;">Builder</span>
<span class="t" style="left:601px;top:691.5px;line-height:18px;font-family:'Liberation Sans', sans-serif;font-size:12.48px;font-weight:400;color:#24292e;letter-spacing:0.06px;-webkit-text-stroke:0.4px #24292e;">Code</span>
<span class="t" style="left:57.2px;top:726.5px;line-height:18px;font-family:'Liberation Mono', monospace;font-size:12.0px;font-weight:400;color:#0b216f;">1</span>
<span class="t" style="left:88.5px;top:726.5px;line-height:18px;font-family:'Liberation Mono', monospace;font-size:12.0px;font-weight:400;color:#0000ff;letter-spacing:0.02px;">select</span>
<span class="t" style="left:153.48000000000002px;top:726.5px;line-height:18px;font-family:'Liberation Mono', monospace;font-size:12.0px;font-weight:400;color:#0000ff;letter-spacing:0.02px;">from</span>
<span class="t" style="left:189.57999999999998px;top:726.5px;line-height:18px;font-family:'Liberation Mono', monospace;font-size:12.0px;font-weight:400;color:#000;letter-spacing:0.02px;">configuration</span>
<span class="t" style="left:290.65999999999997px;top:726.5px;line-height:18px;font-family:'Liberation Mono', monospace;font-size:12.0px;font-weight:400;color:#0000ff;letter-spacing:0.02px;">where</span>
<span class="t" style="left:333.98px;top:726.5px;line-height:18px;font-family:'Liberation Mono', monospace;font-size:12.0px;font-weight:400;color:#000;letter-spacing:0.02px;">name</span>
<span class="t" style="left:370.08px;top:726.5px;line-height:18px;font-family:'Liberation Mono', monospace;font-size:12.0px;font-weight:400;color:#778899;">=</span>
<span class="t" style="left:377.3px;top:726.5px;line-height:18px;font-family:'Liberation Mono', monospace;font-size:12.0px;font-weight:400;color:#ff0000;letter-spacing:0.02px;">'$device'</span>
<span class="t" style="left:442.28px;top:726.5px;line-height:18px;font-family:'Liberation Mono', monospace;font-size:12.0px;font-weight:400;color:#000;">;</span>
<span class="t" style="left:574px;top:967.0px;line-height:16px;font-family:'Liberation Mono', monospace;font-size:11.0px;font-weight:400;color:#24292e;letter-spacing:-1.2px;">{}</span>
<span class="t" style="left:709px;top:17.0px;line-height:21px;font-family:'Liberation Sans', sans-serif;font-size:14.56px;font-weight:400;color:#24292e;letter-spacing:0.24px;-webkit-text-stroke:0.4px #24292e;">Business Forms</span>
<span class="t" style="left:714.4px;top:75.0px;line-height:21px;font-family:'Liberation Sans', sans-serif;font-size:14.56px;font-weight:400;color:#6e7277;letter-spacing:0.1px;">Search options</span>
<span class="t" style="left:709.5px;top:109.5px;line-height:21px;font-family:'Liberation Sans', sans-serif;font-size:14.56px;font-weight:400;color:#24292e;letter-spacing:0.24px;-webkit-text-stroke:0.4px #24292e;clip-path:inset(6.500px 0 0 0);">Initial Request</span>
<span class="t" style="left:709.5px;top:142.0px;line-height:18px;font-family:'Liberation Sans', sans-serif;font-size:12.48px;font-weight:400;color:#24292e;letter-spacing:0.38px;-webkit-text-stroke:0.4px #24292e;">Synchronize with data</span>
<span class="t" style="left:709.5px;top:158.5px;line-height:18px;font-family:'Liberation Sans', sans-serif;font-size:12.48px;font-weight:400;color:#5d6166;letter-spacing:0.29px;">Keeps the panel synched with the dashboard updates.</span>
<span class="t" style="left:750.5px;top:185.0px;line-height:21px;font-family:'Liberation Sans', sans-serif;font-size:14.56px;font-weight:400;color:#24292e;letter-spacing:0.1px;-webkit-text-stroke:0.4px #24292e;">Enabled</span>
<span class="t" style="left:860px;top:185.0px;line-height:21px;font-family:'Liberation Sans', sans-serif;font-size:14.56px;font-weight:400;color:#5d6166;letter-spacing:0.13px;">Disabled</span>
<span class="t" style="left:709.5px;top:226.0px;line-height:18px;font-family:'Liberation Sans', sans-serif;font-size:12.48px;font-weight:400;color:#24292e;letter-spacing:0.38px;-webkit-text-stroke:0.4px #24292e;">Initial Action</span>
<span class="t" style="left:750.3px;top:252.0px;line-height:21px;font-family:'Liberation Sans', sans-serif;font-size:14.56px;font-weight:400;color:#5d6166;letter-spacing:0.11px;">Code</span>
<span class="t" style="left:840.3px;top:252.0px;line-height:21px;font-family:'Liberation Sans', sans-serif;font-size:14.56px;font-weight:400;color:#5d6166;letter-spacing:0.1px;">Data Source</span>
<span class="t" style="left:955.3px;top:252.0px;line-height:21px;font-family:'Liberation Sans', sans-serif;font-size:14.56px;font-weight:400;color:#24292e;letter-spacing:0.27px;-webkit-text-stroke:0.4px #24292e;">Query</span>
<span class="t" style="left:1029px;top:252.0px;line-height:21px;font-family:'Liberation Sans', sans-serif;font-size:14.56px;font-weight:400;color:#5d6166;letter-spacing:-0.65px;">GET</span>
<span class="t" style="left:709.5px;top:293.0px;line-height:18px;font-family:'Liberation Sans', sans-serif;font-size:12.48px;font-weight:400;color:#24292e;letter-spacing:0.23px;-webkit-text-stroke:0.4px #24292e;">Custom Code</span>
<span class="t" style="left:709.5px;top:310.0px;line-height:18px;font-family:'Liberation Sans', sans-serif;font-size:12.48px;font-weight:400;color:#5d6166;letter-spacing:0.29px;">Custom code to execute after initial request.</span>
<span class="t" style="left:732.2px;top:336.0px;line-height:18px;font-family:'Liberation Mono', monospace;font-size:12.0px;font-weight:400;color:#0b216f;">1</span>
<span class="t" style="left:709.5px;top:564.0px;line-height:21px;font-family:'Liberation Sans', sans-serif;font-size:14.56px;font-weight:400;color:#24292e;letter-spacing:0.28px;-webkit-text-stroke:0.4px #24292e;">Initial Fields</span>
<span class="t" style="left:709.5px;top:595.5px;line-height:18px;font-family:'Liberation Sans', sans-serif;font-size:12.48px;font-weight:400;color:#24292e;letter-spacing:0.26px;-webkit-text-stroke:0.4px #24292e;">Query Fields</span>
<span class="t" style="left:709.5px;top:612.5px;line-height:18px;font-family:'Liberation Sans', sans-serif;font-size:12.48px;font-weight:400;color:#5d6166;letter-spacing:0.35px;">Specify fields for appropriate form elements.</span>
<span class="t" style="left:717.5px;top:639.5px;line-height:18px;font-family:'Liberation Sans', sans-serif;font-size:12.48px;font-weight:400;color:#24292e;letter-spacing:0.37px;-webkit-text-stroke:0.5px #24292e;">Max</span>
<span class="t" style="left:834px;top:638.5px;line-height:21px;font-family:'Liberation Sans', sans-serif;font-size:14.56px;font-weight:400;color:#24292e;letter-spacing:0.32px;">A:max</span>
<span class="t" style="left:717.5px;top:675.5px;line-height:18px;font-family:'Liberation Sans', sans-serif;font-size:12.48px;font-weight:400;color:#24292e;letter-spacing:0.45px;-webkit-text-stroke:0.5px #24292e;">Min</span>
<span class="t" style="left:834px;top:674.5px;line-height:21px;font-family:'Liberation Sans', sans-serif;font-size:14.56px;font-weight:400;color:#24292e;letter-spacing:0.33px;">A:min</span>
<span class="t" style="left:717.5px;top:711.5px;line-height:18px;font-family:'Liberation Sans', sans-serif;font-size:12.48px;font-weight:400;color:#24292e;letter-spacing:0.13px;-webkit-text-stroke:0.5px #24292e;">Speed</span>
<span class="t" style="left:834px;top:710.5px;line-height:21px;font-family:'Liberation Sans', sans-serif;font-size:14.56px;font-weight:400;color:#24292e;letter-spacing:0.35px;">A:speed</span>
<span class="t" style="left:717.5px;top:747.5px;line-height:18px;font-family:'Liberation Sans', sans-serif;font-size:12.48px;font-weight:400;color:#24292e;letter-spacing:0.37px;-webkit-text-stroke:0.5px #24292e;">Max</span>
<span class="t" style="left:834px;top:746.5px;line-height:21px;font-family:'Liberation Sans', sans-serif;font-size:14.56px;font-weight:400;color:#24292e;letter-spacing:0.32px;">A:max</span>
<span class="t" style="left:717.5px;top:783.5px;line-height:18px;font-family:'Liberation Sans', sans-serif;font-size:12.48px;font-weight:400;color:#24292e;letter-spacing:0.45px;-webkit-text-stroke:0.5px #24292e;">Min</span>
<span class="t" style="left:834px;top:782.5px;line-height:21px;font-family:'Liberation Sans', sans-serif;font-size:14.56px;font-weight:400;color:#24292e;letter-spacing:0.33px;">A:min</span>
<span class="t" style="left:717.5px;top:819.5px;line-height:18px;font-family:'Liberation Sans', sans-serif;font-size:12.48px;font-weight:400;color:#24292e;letter-spacing:0.13px;-webkit-text-stroke:0.5px #24292e;">Speed</span>
<span class="t" style="left:834px;top:818.5px;line-height:21px;font-family:'Liberation Sans', sans-serif;font-size:14.56px;font-weight:400;color:#24292e;letter-spacing:0.35px;">A:speed</span>
<span class="t" style="left:709.5px;top:881.0px;line-height:21px;font-family:'Liberation Sans', sans-serif;font-size:14.56px;font-weight:400;color:#24292e;letter-spacing:0.35px;-webkit-text-stroke:0.4px #24292e;">Highlight Changes</span>
<span class="t" style="left:728.5px;top:920.0px;line-height:21px;font-family:'Liberation Sans', sans-serif;font-size:14.56px;font-weight:400;color:#24292e;letter-spacing:0.1px;-webkit-text-stroke:0.4px #24292e;">Enabled</span>
<span class="t" style="left:815.7px;top:920.0px;line-height:21px;font-family:'Liberation Sans', sans-serif;font-size:14.56px;font-weight:400;color:#5d6166;letter-spacing:0.2px;">Disabled</span>
<span class="t" style="left:709.5px;top:960.5px;line-height:18px;font-family:'Liberation Sans', sans-serif;font-size:12.48px;font-weight:400;color:#24292e;letter-spacing:0.35px;-webkit-text-stroke:0.4px #24292e;">Color</span>
<span class="t" style="left:745.5px;top:987.0px;line-height:21px;font-family:'Liberation Sans', sans-serif;font-size:14.56px;font-weight:400;color:#24292e;letter-spacing:-0.02px;">red</span>
</div>
</body></html>
